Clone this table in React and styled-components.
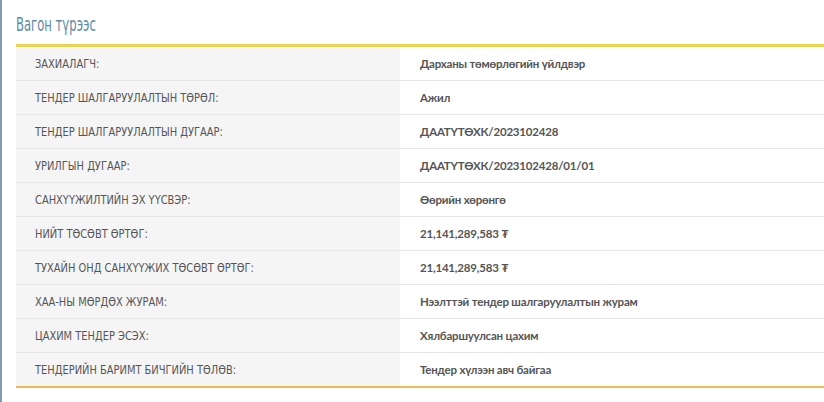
import React from "react";
import styled, { createGlobalStyle } from "styled-components";

const GlobalStyle = createGlobalStyle`
  html, body {
    margin: 0;
    padding: 0;
    background: #fff;
  }
  body {
    font-family: "DejaVu Sans Condensed", "DejaVu Sans", sans-serif;
  }
`;

const Page = styled.div`
  min-height: 402px;
  border-left: 2px solid #7f9bb0;
  padding-left: 14px;
  box-sizing: border-box;
`;

const Title = styled.h3`
  margin: 0;
  height: 44px;
  display: flex;
  align-items: center;
  padding-top: 4px;
  box-sizing: border-box;
  font-weight: normal;
  font-size: 19px;
  color: #5b8aa7;
`;

// the original font is much narrower than anything installed
const Condensed = styled.span`
  display: inline-block;
  white-space: nowrap;
  transform: scaleX(${({ scale }) => scale});
  transform-origin: left center;
`;

const Table = styled.div`
  border-top: 3px solid #e8d453;
  border-bottom: 2px solid #ecbb57;
`;

const Row = styled.div`
  display: grid;
  grid-template-columns: 384px 1fr;
  height: ${({ last }) => (last ? "33px" : "34px")};
  border-bottom: ${({ last }) => (last ? "none" : "1px solid #e6e6e6")};
  box-sizing: border-box;
`;

const Label = styled.div`
  background: #f5f5f5;
  display: flex;
  align-items: center;
  padding-left: 19px;
  padding-bottom: 1px;
  font-size: 13px;
  color: #555;
`;

const Value = styled.div`
  display: flex;
  align-items: center;
  padding-left: 20px;
  padding-bottom: 1px;
  font-family: "Lato", sans-serif;
  font-weight: bold;
  font-size: 11.5px;
  letter-spacing: -0.2px;
  color: #555;
`;

const rows = [
  ["ЗАХИАЛАГЧ:", "Дарханы төмөрлөгийн үйлдвэр"],
  ["ТЕНДЕР ШАЛГАРУУЛАЛТЫН ТӨРӨЛ:", "Ажил"],
  ["ТЕНДЕР ШАЛГАРУУЛАЛТЫН ДУГААР:", "ДААТҮТӨХК/2023102428"],
  ["УРИЛГЫН ДУГААР:", "ДААТҮТӨХК/2023102428/01/01"],
  ["САНХҮҮЖИЛТИЙН ЭХ ҮҮСВЭР:", "Өөрийн хөрөнгө"],
  ["НИЙТ ТӨСӨВТ ӨРТӨГ:", "21,141,289,583 ₮"],
  ["ТУХАЙН ОНД САНХҮҮЖИХ ТӨСӨВТ ӨРТӨГ:", "21,141,289,583 ₮"],
  ["ХАА-НЫ МӨРДӨХ ЖУРАМ:", "Нээлттэй тендер шалгаруулалтын журам"],
  ["ЦАХИМ ТЕНДЕР ЭСЭХ:", "Хялбаршуулсан цахим"],
  ["ТЕНДЕРИЙН БАРИМТ БИЧГИЙН ТӨЛӨВ:", "Тендер хүлээн авч байгаа"],
];

export default function App() {
  return (
    <>
      <GlobalStyle />
      <Page>
        <Title>
          <Condensed scale={0.68}>Вагон түрээс</Condensed>
        </Title>
        <Table>
          {rows.map(([label, value], i) => (
            <Row key={label} last={i === rows.length - 1}>
              <Label>
                <Condensed scale={0.845}>{label}</Condensed>
              </Label>
              <Value>{value}</Value>
            </Row>
          ))}
        </Table>
      </Page>
    </>
  );
}
